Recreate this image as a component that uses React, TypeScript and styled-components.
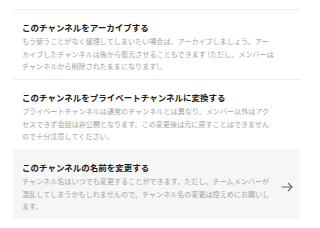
import React from "react";
import styled, { createGlobalStyle } from "styled-components";

const GlobalStyle = createGlobalStyle`
  html, body {
    margin: 0;
    padding: 0;
    background: #ffffff;
  }
  body {
    font-family: "Noto Sans CJK JP", "Noto Sans", sans-serif;
  }
`;

interface ItemData {
  title: string;
  description: string;
  active?: boolean;
}

const items: ItemData[] = [
  {
    title: "このチャンネルをアーカイブする",
    description:
      "もう使うことがなく整理してしまいたい場合は、アーカイブしましょう。アーカイブしたチャンネルは後から復元させることもできます (ただし、メンバーはチャンネルから削除されたままになります)。",
  },
  {
    title: "このチャンネルをプライベートチャンネルに変換する",
    description:
      "プライベートチャンネルは通常のチャンネルとは異なり、メンバー以外はアクセスできず会話は非公開となります。この変更後は元に戻すことはできませんので十分注意してください。",
  },
  {
    title: "このチャンネルの名前を変更する",
    description:
      "チャンネル名はいつでも変更することができます。ただし、チームメンバーが混乱してしまうかもしれませんので、チャンネル名の変更は控えめにお願いします。",
    active: true,
  },
];

const App = () => {
  return (
    <>
      <GlobalStyle />
      <Page>
        <List>
          {items.map((item) => (
            <Item key={item.title} $active={item.active}>
              <Text>
                <Title>{item.title}</Title>
                <Description>{item.description}</Description>
              </Text>
              {item.active && (
                <Arrow width="12" height="10" viewBox="0 0 12 10">
                  <path d="M0.5 5 H11 M7 1 L11 5 L7 9" />
                </Arrow>
              )}
            </Item>
          ))}
        </List>
      </Page>
    </>
  );
};

export default App;

const Page = styled.main`
  width: 320px;
  height: 228px;
  padding: 9px 20px 0 13px;
  box-sizing: border-box;
  overflow: hidden;
`;

const List = styled.ul`
  list-style: none;
  margin: 0;
  padding: 0;
`;

const Item = styled.li<{ $active?: boolean }>`
  display: flex;
  align-items: flex-start;
  height: 70px;
  box-sizing: border-box;
  padding: 10px 7px 0 9px;
  border-top: 1px solid ${(p) => (p.$active ? "#f6f6f6" : "#ededed")};
  background: ${(p) => (p.$active ? "#f6f6f6" : "transparent")};
`;

const Text = styled.div`
  width: 253px;
`;

const Title = styled.div`
  font-size: 8.5px;
  font-weight: 700;
  line-height: 14px;
  color: #1d1c1d;
  margin-bottom: 1px;
`;

const Description = styled.p`
  margin: 0;
  font-size: 7.1px;
  line-height: 12.5px;
  color: #a3a3a3;
`;

const Arrow = styled.svg`
  margin-left: auto;
  align-self: center;
  margin-top: -6px;
  fill: none;
  stroke: #666666;
  stroke-width: 1.1;
`;
